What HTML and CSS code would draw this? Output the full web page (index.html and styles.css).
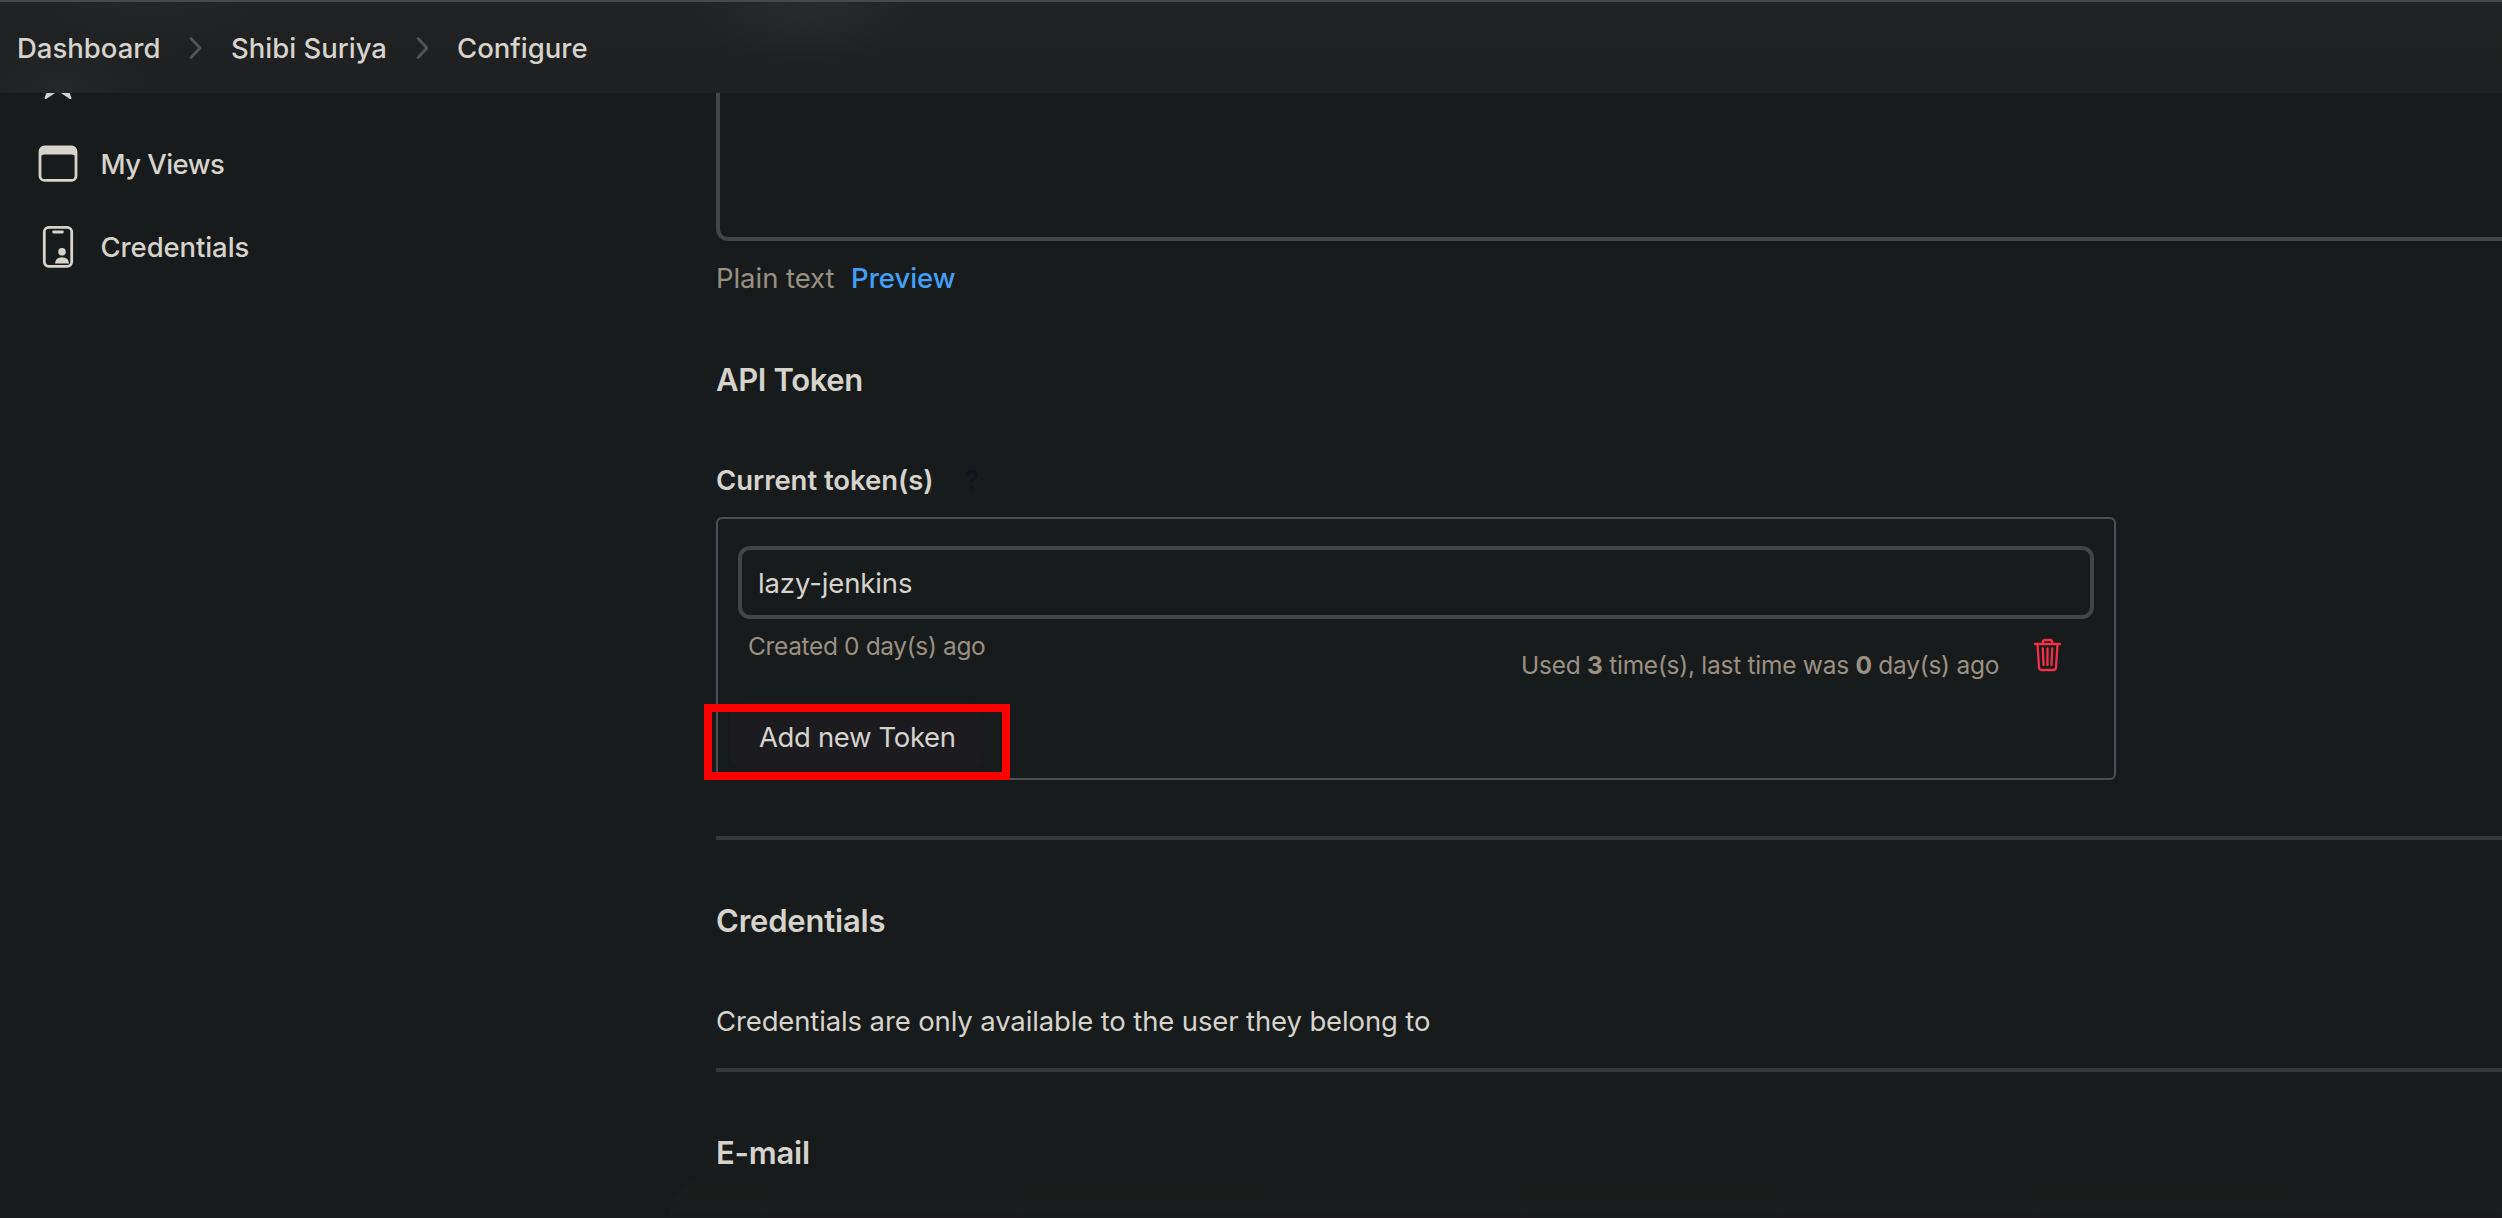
FILE: index.html
```html
<!DOCTYPE html>
<html lang="en">
<head>
<meta charset="utf-8">
<title>Configure</title>
<link rel="stylesheet" href="styles.css">
</head>
<body>
<header class="topbar">
  <nav class="crumbs">
    <a class="t crumb crumb-dashboard">Dashboard</a>
    <svg class="chevron" viewBox="0 0 14 24"><path d="M2 2.500 L11 12 L2 21.500"/></svg>
    <a class="t crumb crumb-user">Shibi Suriya</a>
    <svg class="chevron" viewBox="0 0 14 24"><path d="M2 2.500 L11 12 L2 21.500"/></svg>
    <a class="t crumb crumb-page">Configure</a>
  </nav>
</header>
<div class="page">
  <aside class="side">
    <div class="task task-cut"><svg class="star" viewBox="0 0 28 8"><path d="M2.500 0H11L2.200 5.900Q.2 6.600.6 4.500ZM25.500 0H17L25.800 5.900Q27.800 6.600 27.400 4.500Z"/></svg></div>
    <div class="task">
      <svg class="icon" viewBox="0 0 44 44"><rect x="4" y="5" width="36" height="33.400" rx="4.500" fill="none" stroke="currentColor" stroke-width="2.800"/><path d="M4 15V9.500Q4 5 8.500 5H35.500Q40 5 40 9.500V15Q39 12.400 36 12.400H8Q5 12.400 4 15Z" fill="currentColor"/></svg>
      <span class="t task-views">My Views</span>
    </div>
    <div class="task">
      <svg class="icon" viewBox="0 0 44 44"><rect x="8.300" y="2.300" width="27.400" height="39" rx="4.500" fill="none" stroke="currentColor" stroke-width="2.800"/><rect x="16.200" y="5.400" width="11.600" height="3" rx="1.300" fill="currentColor"/><circle cx="26" cy="26.800" r="3.800" fill="currentColor"/><path d="M19 38.600Q19.500 32.200 26 32.200Q32.500 32.200 33 38.600Z" fill="currentColor"/></svg>
      <span class="t task-creds">Credentials</span>
    </div>
  </aside>
  <main class="main">
    <div class="textarea"></div>
    <div class="preview-row"><span class="t plain">Plain text</span><a class="t preview">Preview</a></div>
    <h2 class="t h h-api">API Token</h2>
    <div class="label-row"><span class="t label">Current token(s)</span><span class="help">?</span></div>
    <section class="tokens">
      <div class="field"><span class="t field-text">lazy-jenkins</span></div>
      <div class="meta">
        <span class="t created">Created 0 day(s) ago</span>
        <span class="t used">Used <b>3</b> time(s), last time was <b>0</b> day(s) ago</span>
        <svg class="trash" viewBox="0 0 28 34"><path d="M2 6H27M4.500 6L6 29.500Q6.200 32 8.500 32H20.500Q22.800 32 23 29.500L24.500 6M10 6V3.500Q10 2 12 2H17Q19 2 19 3.500V6M9.800 10.500L10.500 27M14.500 10.500V27M19.200 10.500L18.500 27"/></svg>
      </div>
      <button class="add"><span class="t add-text">Add new Token</span></button>
      <div class="marker"></div>
    </section>
    <hr class="rule rule-a">
    <h2 class="t h h-creds">Credentials</h2>
    <p class="t note">Credentials are only available to the user they belong to</p>
    <hr class="rule rule-b">
    <h2 class="t h h-mail">E-mail</h2>
    <div class="bottom-bar"></div>
  </main>
</div>
</body>
</html>
```
FILE: styles.css
```css
* { box-sizing: border-box; }
body {
  margin: 0; height: 1218px; overflow: hidden;
  background: #181b1b; color: #d6d3cd;
  font: 520 27.500px/40px Inter, "Liberation Sans", sans-serif;
}
.t { white-space: nowrap; display: block; }
.topbar {
  height: 93px; border-top: 2px solid #474848;
  background:
    radial-gradient(ellipse 130px 60px at 805px 0, #292c2c, transparent),
    radial-gradient(ellipse 90px 60px at 60px 91px, #252828, transparent),
    radial-gradient(ellipse 150px 50px at 150px 0, #242727, transparent),
    linear-gradient(#1f2222, #1f2021);
}
.crumbs { display: flex; align-items: center; height: 91px; padding: 1px 0 0 17px; }
.crumb { font-weight: 540; }
.crumb-dashboard { width: 172px; }
.crumb-user { width: 185px; }
.crumb-page { margin-left: -1px; }
.chevron { width: 14px; height: 24px; margin-right: 28px; fill: none; stroke: #505456; stroke-width: 2.800; stroke-linecap: round; stroke-linejoin: round; }
.page { display: flex; height: 1125px; }
.side { width: 716px; padding-left: 36px; }
.task { height: 83px; display: flex; align-items: center; gap: 20.500px; }
.task-cut { height: 29px; align-items: flex-start; padding-left: 8px; }
.task-views { letter-spacing: -.55px; padding-top: 1px; }
.task-creds { letter-spacing: -.1px; padding-top: 1px; }
.star { width: 28px; height: 8px; fill: #d6d3cd; }
.icon { width: 44px; height: 44px; }
.main { flex: 1; min-width: 0; display: flex; flex-direction: column; }
.textarea { flex: none; height: 148px; border: 4px solid #424647; border-width: 0 0 4px 4px; border-radius: 0 0 0 12px; }
.preview-row { display: flex; margin-top: 17px; height: 40px; }
.plain { width: 135px; color: #989083; font-weight: 420; letter-spacing: -.05px; }
.preview { color: #429ff6; }
.h { margin: 0; font-size: 31px; line-height: 44px; font-weight: 600; letter-spacing: -.2px; }
.h-api { margin-top: 60px; letter-spacing: -.35px; }
.label-row { display: flex; margin-top: 58px; height: 40px; align-items: center; }
.label { width: 236px; font-weight: 600; letter-spacing: -.05px; }
.help { width: 40px; height: 40px; border: 2px solid #1b1b1c; border-radius: 50%; color: #12121d; font-weight: 600; font-size: 25px; line-height: 36px; text-align: center; }
.tokens { position: relative; flex: none; width: 1400px; height: 263px; margin-top: 17px; border: 2px solid #495057; border-radius: 6px; padding: 27px 20px 0; }
.field { height: 73px; border: 4px solid #424647; border-radius: 12px; padding: 13px 16px; font-weight: 420; letter-spacing: -.12px; }
.meta { display: flex; font-size: 24.500px; font-weight: 420; color: #9a9084; }
.created { width: 783px; padding: 7px 0 0 10px; letter-spacing: -.36px; }
.used { width: 512px; padding-top: 26px; letter-spacing: -.26px; }
.meta b { font-weight: 700; }
.trash { width: 28px; height: 34px; margin-top: 19px; fill: none; stroke: #f52e4a; stroke-width: 2.300; stroke-linecap: round; stroke-linejoin: round; }
.add { display: block; width: 254px; height: 72px; margin: 15px 0 0 -8px; border: 0; border-radius: 20px; background: #1c1c20; color: inherit; font: inherit; font-weight: 420; padding: 1px 0 0 29px; text-align: left; letter-spacing: -.36px; }
.marker { position: absolute; left: -14px; top: 185px; width: 306px; height: 76px; border: 8px solid #f00; }
.rule { width: 100%; height: 4px; margin: 0; border: 0; background: #34383a; flex: none; }
.rule-a { margin-top: 56px; }
.h-creds { margin-top: 59px; }
.note { margin: 58px 0 0; font-weight: 420; letter-spacing: -.13px; }
.rule-b { margin-top: 27px; }
.h-mail { margin-top: 59px; }
.bottom-bar { flex: 1; margin: 0 0 0 -46px; border-radius: 60px 0 0 0; background: linear-gradient(#181b1b, #1c1c1d 35%, #1b1d1e 90%, #18181a); }
```
